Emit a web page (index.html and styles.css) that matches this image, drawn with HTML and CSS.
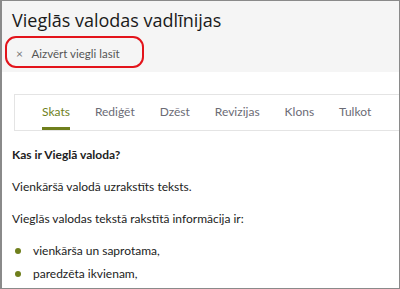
FILE: index.html
```html
<!DOCTYPE html>
<html lang="lv">
<head>
  <meta charset="UTF-8">
  <title>Vieglās valodas vadlīnijas</title>
  <link rel="stylesheet" href="styles.css">
</head>
<body>
  <div class="frame">
    <header class="page-head">
      <h1>Vieglās valodas vadlīnijas</h1>
      <div class="easy-read">
        <a class="close-easy" href="#"><span class="x">×</span> Aizvērt viegli lasīt</a>
      </div>
    </header>

    <nav class="tabs">
      <a class="tab active" href="#">Skats</a>
      <a class="tab" href="#">Rediģēt</a>
      <a class="tab" href="#">Dzēst</a>
      <a class="tab" href="#">Revizijas</a>
      <a class="tab" href="#">Klons</a>
      <a class="tab" href="#">Tulkot</a>
    </nav>

    <div class="content">
      <p class="lead">Kas ir Vieglā valoda?</p>
      <p>Vienkāršā valodā uzrakstīts teksts.</p>
      <p>Vieglās valodas tekstā rakstītā informācija ir:</p>
      <ul>
        <li>vienkārša un saprotama,</li>
        <li>paredzēta ikvienam,</li>
      </ul>
    </div>
  </div>
</body>
</html>
```

FILE: styles.css
```css
html, body {
  margin: 0;
  background: #fff;
}
.frame {
  box-sizing: border-box;
  width: 400px;
  height: 289px;
  border: 1px solid #8a8a8a;
  border-left-width: 2px;
  overflow: hidden;
  font-family: Lato, 'Open Sans', sans-serif;
  color: #222;
}
.page-head {
  background: #f5f5f5;
  padding: 5px 10px 0;
  height: 66px;
}
h1 {
  margin: 0;
  font-family: 'Open Sans', sans-serif;
  font-size: 18px;
  font-weight: 500;
  line-height: 28px;
  color: #1a1a1a;
}
.easy-read {
  display: inline-block;
  margin: 2px 0 0 -7px;
  padding: 4px 22px 5px 9px;
  border: 2px solid #e3141b;
  border-radius: 11px;
}
.close-easy {
  color: #555;
  font-size: 11.5px;
  text-decoration: none;
}
.close-easy .x {
  color: #777;
  font-size: 12px;
  margin-right: 6px;
}
.tabs {
  display: flex;
  margin: 22px 0 0 12px;
  height: 35px;
  border: 1px solid #e4e4e4;
  border-right: none;
  padding-left: 27px;
  gap: 25px;
}
.tab {
  font-size: 12px;
  color: #6b6b75;
  text-decoration: none;
  line-height: 34px;
  border-bottom: 3px solid transparent;
}
.tab.active {
  color: #6f7f1c;
  border-bottom-color: #6f7f1c;
}
.content {
  padding: 0 10px;
  font-size: 12px;
  color: #222;
}
.content p {
  margin: 17px 0 0;
  line-height: 15px;
}
.content p.lead {
  font-weight: 700;
  margin-top: 16px;
}
.content ul {
  list-style: none;
  margin: 17px 0 0;
  padding: 0;
}
.content li {
  position: relative;
  padding-left: 21px;
  line-height: 15px;
  margin-bottom: 8px;
}
.content li::before {
  content: '';
  position: absolute;
  left: 3px;
  top: 5px;
  width: 6px;
  height: 6px;
  border-radius: 50%;
  background: #6f7f1c;
}
```
